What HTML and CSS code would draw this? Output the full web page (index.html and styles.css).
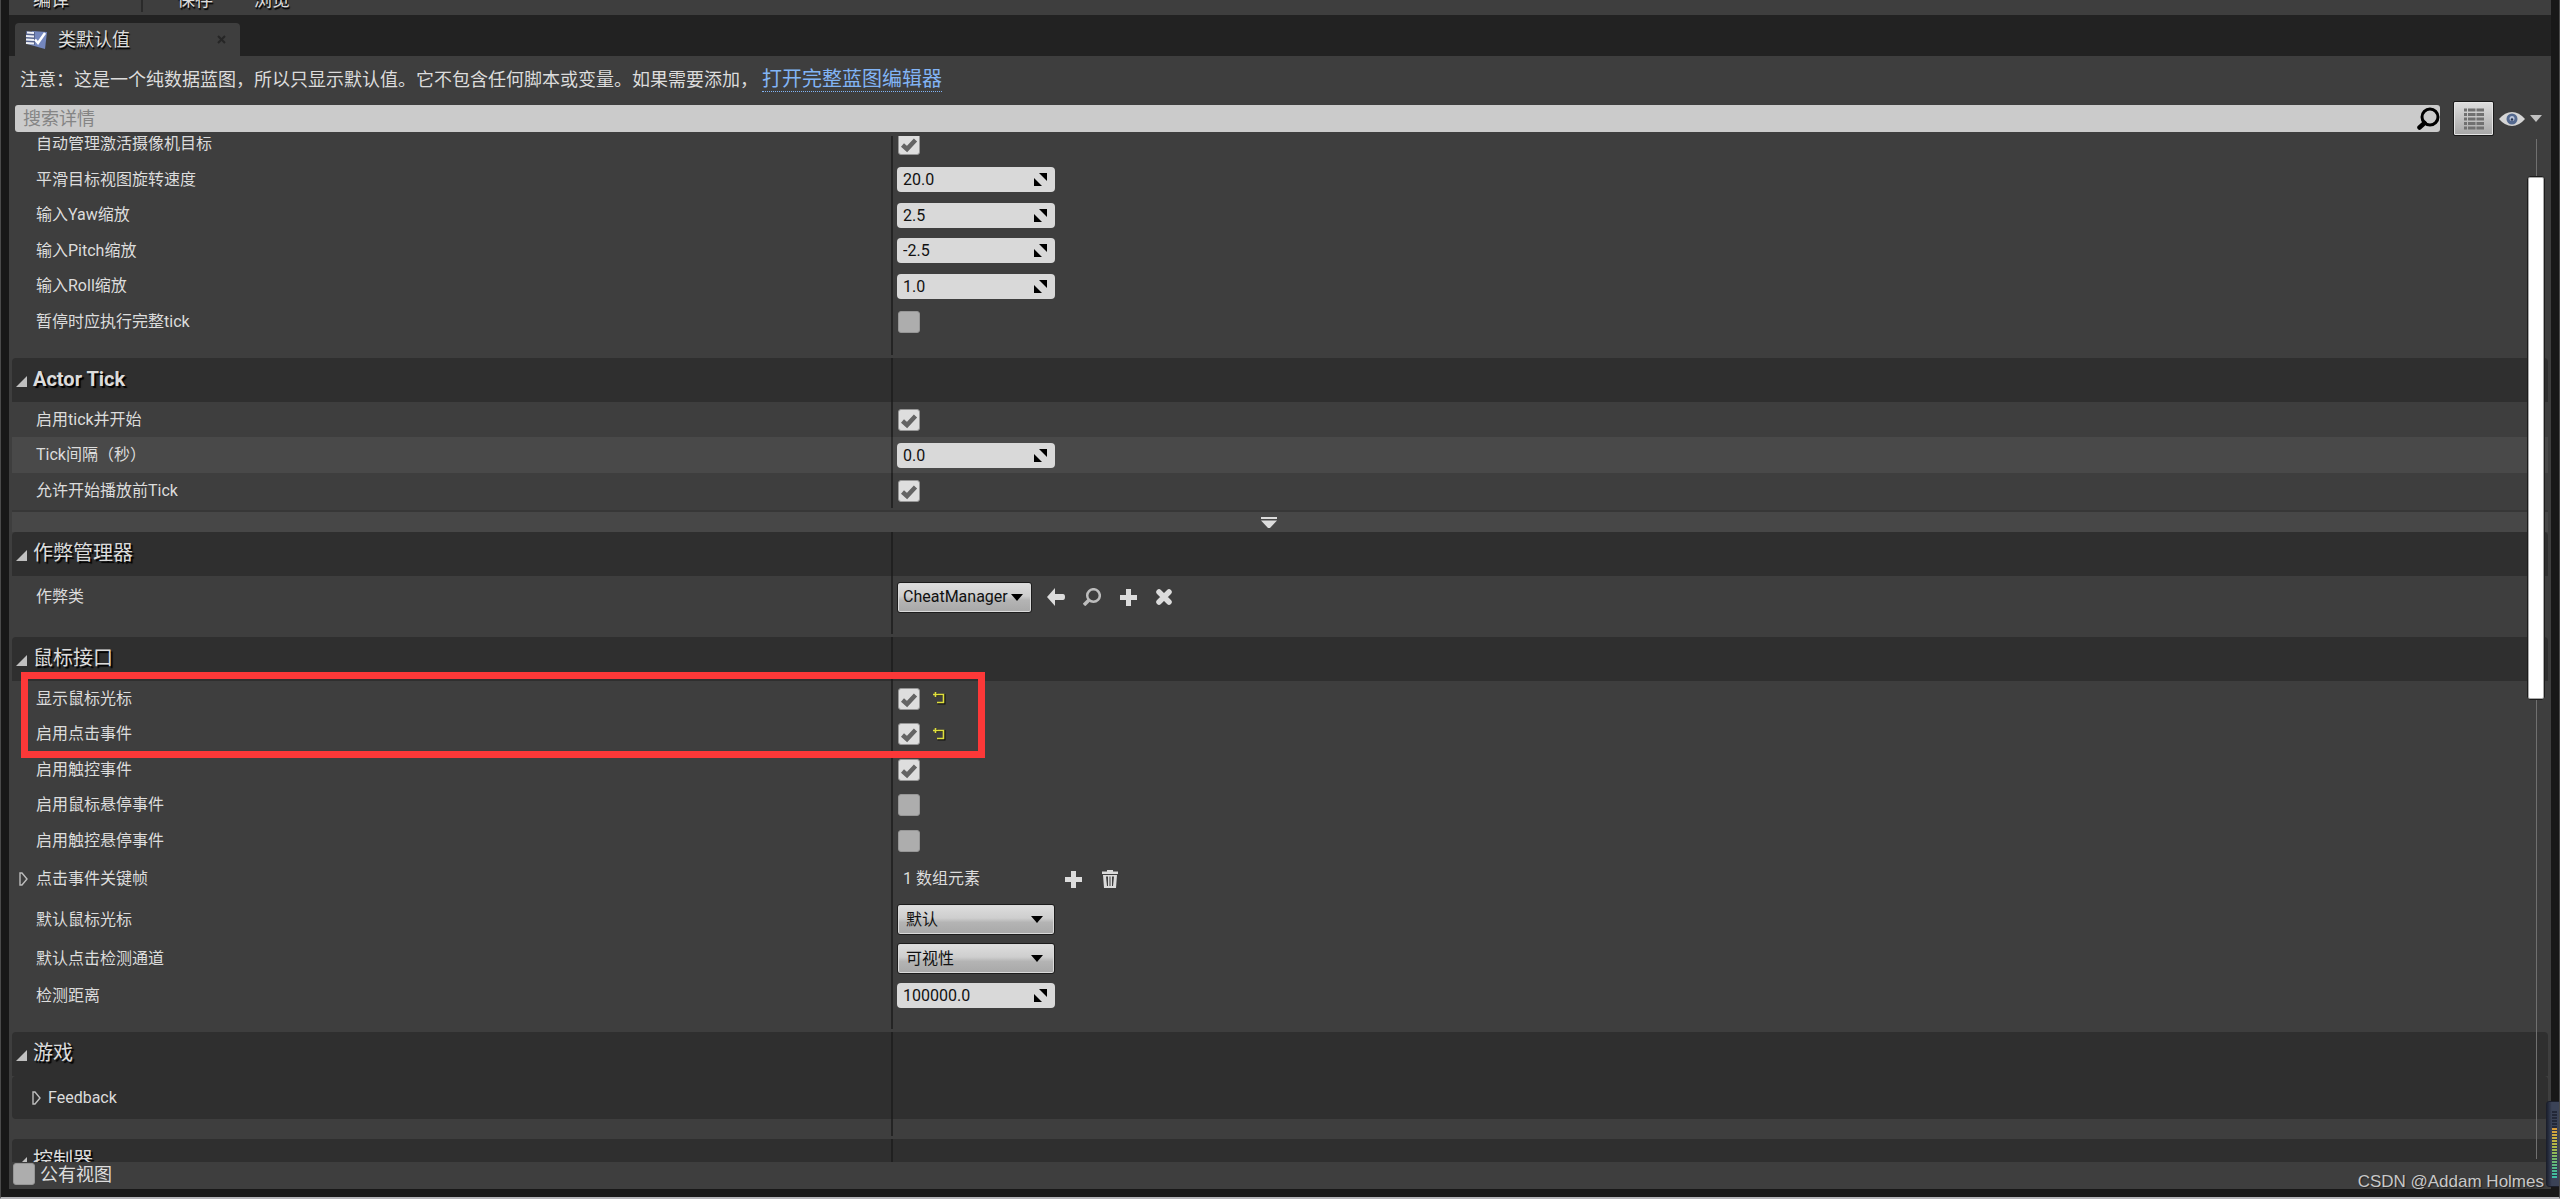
FILE: index.html
```html
<!DOCTYPE html>
<html lang="zh-CN">
<head>
<meta charset="utf-8">
<title>类默认值</title>
<link rel="stylesheet" href="styles.css">
</head>
<body>
<svg class="defs" width="0" height="0" aria-hidden="true">
  <symbol id="spin" viewBox="0 0 13 13"><path d="M5 0H13V8ZM0 5V13H8Z"/></symbol>
  <symbol id="down" viewBox="0 0 12 7"><path d="M0 0H12L6 7Z"/></symbol>
  <symbol id="open" viewBox="0 0 11 11"><path d="M0 11H11V0Z"/></symbol>
  <symbol id="closed" viewBox="0 0 9 14"><path d="M1 1H3L8 7L3 13H1Z" fill="none" stroke="currentColor" stroke-width="1.4"/></symbol>
  <symbol id="plus" viewBox="0 0 17 17"><path d="M6 0H11V6H17V11H11V17H6V11H0V6H6Z"/></symbol>
  <symbol id="reset" viewBox="0 0 13 13"><path d="M3.500 4.500V1M2 3H11.500V11.500H4.500" fill="none" stroke="#111" stroke-width="2"/><path d="M2.500 0V5M0 2.500H10.500V10.500H4" fill="none" stroke="#dede3c" stroke-width="1.600"/></symbol>
</svg>
<div class="window">
  <nav class="toolbar">
    <button class="tool">编译</button>
    <span class="rule"></span>
    <button class="tool">保存</button>
    <button class="tool">浏览</button>
  </nav>
  <div class="tabs">
    <div class="tab">
      <svg width="23" height="20" viewBox="0 0 23 20"><path d="M7 1L22 2L20 19L2 14Z" fill="#7487bd"/><path d="M1 1L10 2V15L1 13Z" fill="#56638c"/><path d="M2 2.500L9 3M1 6L9 6.500M1 9.500L9 10M1 13L9 13.500" stroke="#eef0f6" stroke-width="2.200"/><path d="M10 9.500L13 13L20 3" fill="none" stroke="#fff" stroke-width="2.500"/></svg>
      <span class="tab-name">类默认值</span>
      <button class="close" aria-label="关闭"><svg width="9" height="9" viewBox="0 0 9 9"><path d="M1 1L8 8M8 1L1 8" stroke="#262626" stroke-width="2"/></svg></button>
    </div>
  </div>
  <p class="notice">注意<span class="mid">：</span>这是一个纯数据蓝图<span class="mid">，</span>所以只显示默认值。它不包含任何脚本或变量。如果需要添加<span class="mid">，</span><a class="link" href="#">打开完整蓝图编辑器</a></p>
  <div class="searchbar">
    <div class="search">
      <input class="search-input" type="text" placeholder="搜索详情" aria-label="搜索详情">
      <svg width="23" height="23" viewBox="0 0 23 23"><circle cx="13" cy="10" r="8" fill="none" stroke="#000" stroke-width="3"/><path d="M7.500 16L2.500 20.500" stroke="#000" stroke-width="4.500" stroke-linecap="round"/></svg>
    </div>
    <button class="matrix" aria-label="属性矩阵"><svg width="20" height="22" viewBox="0 0 20 22" stroke="#707070" stroke-width="3.200"><path d="M0 2H3M4 2H11.500M12.500 2H20M0 6.500H3M4 6.500H11.500M12.500 6.500H20M0 11H3M4 11H11.500M12.500 11H20M0 15.500H3M4 15.500H11.500M12.500 15.500H20M0 20H3M4 20H11.500M12.500 20H20"/></svg></button>
    <button class="view" aria-label="视图选项">
      <svg width="26" height="16" viewBox="0 0 26 16"><path d="M0 8Q6 1 13 1T26 8Q20 15 13 15T0 8Z" fill="#d5d5d5"/><circle cx="13" cy="8" r="5.500" fill="#54698f"/><circle cx="13" cy="7.500" r="2.500" fill="#b7c2d8"/><circle cx="13" cy="8.500" r="1.200" fill="#23314d"/></svg>
      <svg width="12" height="7" fill="#c0c0c0"><use href="#down"/></svg>
    </button>
  </div>

  <main class="details">
    <section class="group first">
      <div class="rows">
        <div class="row tall"><label class="name" for="p1">自动管理激活摄像机目标</label><div class="value"><input class="check" type="checkbox" id="p1" checked></div></div>
        <div class="row"><label class="name" for="p2">平滑目标视图旋转速度</label><div class="value"><span class="number"><input type="text" id="p2" value="20.0"><svg width="13" height="13"><use href="#spin"/></svg></span></div></div>
        <div class="row tall"><label class="name" for="p3">输入Yaw缩放</label><div class="value"><span class="number"><input type="text" id="p3" value="2.5"><svg width="13" height="13"><use href="#spin"/></svg></span></div></div>
        <div class="row"><label class="name" for="p4">输入Pitch缩放</label><div class="value"><span class="number"><input type="text" id="p4" value="-2.5"><svg width="13" height="13"><use href="#spin"/></svg></span></div></div>
        <div class="row tall"><label class="name" for="p5">输入Roll缩放</label><div class="value"><span class="number"><input type="text" id="p5" value="1.0"><svg width="13" height="13"><use href="#spin"/></svg></span></div></div>
        <div class="row"><label class="name" for="p6">暂停时应执行完整tick</label><div class="value"><input class="check" type="checkbox" id="p6"></div></div>
        <div class="row pad"></div>
      </div>
    </section>

    <section class="group">
      <h2 class="head latin"><svg width="11" height="11"><use href="#open"/></svg>Actor Tick</h2>
      <div class="rows">
        <div class="row"><label class="name" for="p7">启用tick并开始</label><div class="value"><input class="check" type="checkbox" id="p7" checked></div></div>
        <div class="row tall hover"><label class="name" for="p8">Tick间隔（秒）</label><div class="value"><span class="number"><input type="text" id="p8" value="0.0"><svg width="13" height="13"><use href="#spin"/></svg></span></div></div>
        <div class="row"><label class="name" for="p9">允许开始播放前Tick</label><div class="value"><input class="check" type="checkbox" id="p9" checked></div></div>
      </div>
      <button class="more" aria-label="展开高级"><svg width="16" height="11" viewBox="0 0 16 11"><path d="M0 0H16V2H0ZM0 3.500H16L9 11H7Z" fill="#dcdcdc"/></svg></button>
    </section>

    <section class="group">
      <h2 class="head"><svg width="11" height="11"><use href="#open"/></svg>作弊管理器</h2>
      <div class="rows">
        <div class="row large"><label class="name" for="p10">作弊类</label><div class="value">
          <span class="combo class-combo"><select id="p10"><option>CheatManager</option></select><svg width="12" height="7"><use href="#down"/></svg></span>
          <span class="tools">
            <button class="icon" aria-label="使用选中"><svg width="18" height="18" viewBox="0 0 18 18"><path d="M0 9L8 0V6H16Q18 6 18 9T16 12H8V18Z"/></svg></button>
            <button class="icon" aria-label="浏览"><svg width="18" height="18" viewBox="0 0 18 18"><circle cx="10.500" cy="7.500" r="6.300" fill="none" stroke="#bdbdbd" stroke-width="2.500"/><path d="M6 12L1 17" stroke="#bdbdbd" stroke-width="3.500"/></svg></button>
            <button class="icon" aria-label="新建"><svg width="17" height="17"><use href="#plus"/></svg></button>
            <button class="icon" aria-label="清除"><svg width="16" height="16" viewBox="0 0 16 16"><path d="M3 3L13 13M13 3L3 13" stroke="#dcdcdc" stroke-width="5.500" stroke-linecap="round"/></svg></button>
          </span></div></div>
        <div class="row pad"></div>
      </div>
    </section>

    <section class="group">
      <h2 class="head"><svg width="11" height="11"><use href="#open"/></svg>鼠标接口</h2>
      <div class="rows marked">
        <div class="row"><label class="name" for="p11">显示鼠标光标</label><div class="value"><input class="check" type="checkbox" id="p11" checked><button class="reset" aria-label="重置"><svg width="13" height="13"><use href="#reset"/></svg></button></div></div>
        <div class="row tall"><label class="name" for="p12">启用点击事件</label><div class="value"><input class="check" type="checkbox" id="p12" checked><button class="reset" aria-label="重置"><svg width="13" height="13"><use href="#reset"/></svg></button></div></div>
        <div class="row"><label class="name" for="p13">启用触控事件</label><div class="value"><input class="check" type="checkbox" id="p13" checked></div></div>
        <div class="row tall"><label class="name" for="p14">启用鼠标悬停事件</label><div class="value"><input class="check" type="checkbox" id="p14"></div></div>
        <div class="row"><label class="name" for="p15">启用触控悬停事件</label><div class="value"><input class="check" type="checkbox" id="p15"></div></div>
        <div class="row large"><span class="name array-name"><button class="twist" aria-label="展开"><svg width="9" height="14"><use href="#closed"/></svg></button>点击事件关键帧</span><div class="value">
          <span class="count">1 数组元素</span>
          <button class="icon" aria-label="添加元素"><svg width="17" height="17"><use href="#plus"/></svg></button>
          <button class="icon trash" aria-label="清空"><svg width="16" height="18" viewBox="0 0 16 18"><path d="M0 1.500H5V0H11V1.500H16V4H0Z"/><path fill-rule="evenodd" d="M1 5H15L14 18H2ZM4 6.500L5 16H6V6.500ZM7.500 6.500V16H8.500V6.500ZM10 6.500V16H11L12 6.500Z"/></svg></button></div></div>
        <div class="row combo-row"><label class="name" for="p16">默认鼠标光标</label><div class="value"><span class="combo"><select id="p16"><option>默认</option></select><svg width="12" height="7"><use href="#down"/></svg></span></div></div>
        <div class="row combo-row"><label class="name" for="p17">默认点击检测通道</label><div class="value"><span class="combo"><select id="p17"><option>可视性</option></select><svg width="12" height="7"><use href="#down"/></svg></span></div></div>
        <div class="row"><label class="name" for="p18">检测距离</label><div class="value"><span class="number"><input type="text" id="p18" value="100000.0"><svg width="13" height="13"><use href="#spin"/></svg></span></div></div>
        <div class="row pad"></div>
      </div>
    </section>

    <section class="group">
      <h2 class="head"><svg width="11" height="11"><use href="#open"/></svg>游戏</h2>
      <div class="rows">
        <div class="row large sub"><span class="name"><button class="twist" aria-label="展开"><svg width="9" height="14"><use href="#closed"/></svg></button>Feedback</span><div class="value"></div></div>
        <div class="row pad"></div>
      </div>
    </section>

    <section class="group">
      <h2 class="head"><svg width="11" height="11"><use href="#open"/></svg>控制器</h2>
    </section>
    <div class="scroll"><div class="thumb"></div></div>
  </main>
  <footer class="foot"><input class="check" type="checkbox" id="pub"><label for="pub">公有视图</label></footer>
</div>
<div class="meter"><div class="idle"></div><div class="level"></div></div>
<div class="credit">CSDN @Addam Holmes</div>
</body>
</html>
```
FILE: styles.css
```css
*, *::before { box-sizing: border-box; }
body {
  margin: 0;
  height: 100vh;
  overflow: hidden;
  position: relative;
  display: flex;
  background: #181818;
  border-left: 1px solid #4a4a4a;
  border-right: 1px solid #4a4a4a;
  border-bottom: 2px solid #b4b4b8;
  padding: 0 8px 8px;
  color: #dcdcdc;
  font: 16px/20px Roboto, "Noto Sans CJK SC", sans-serif;
}
svg { display: block; flex: none; }
.defs { position: absolute; }
button {
  appearance: none;
  border: 0;
  padding: 0;
  margin: 0;
  background: none;
  color: inherit;
  font: inherit;
}
.window { flex: 1; min-width: 0; display: flex; flex-direction: column; background: #3e3e3e; }

.toolbar {
  height: 15px;
  padding-left: 24px;
  display: flex;
  align-items: flex-end;
  overflow: hidden;
}
.tool { font-size: 18px; line-height: 20px; padding-bottom: 5px; text-shadow: 1px 2px 1px #000; }
.tool + .tool { margin-left: 41px; }
.rule { width: 2px; height: 12px; background: #2a2a2a; margin: 0 34px 0 72px; align-self: flex-start; }

.tabs { height: 41px; padding: 8px 6px 0; background: #222; }
.tab {
  width: 225px;
  height: 33px;
  padding: 0 14px 0 10px;
  display: flex;
  align-items: center;
  background: #3e3e3e;
  border-radius: 4px 4px 0 0;
}
.tab-name { flex: 1; margin-left: 10px; font-size: 18px; text-shadow: 1px 2px 1px #000; }

.notice { margin: 0; padding: 10px 11px 0; height: 48px; font-size: 18px; line-height: 24px; }
.mid { font-family: "Noto Sans CJK TC", sans-serif; }
.link {
  margin-left: 4px;
  display: inline-block;
  color: #82b4f5;
  font-size: 20px;
  line-height: 24px;
  text-decoration: none;
  border-bottom: 1px dotted #82b4f5;
}

.searchbar { height: 32px; padding: 0 9px 3px 6px; display: flex; align-items: center; }
.search {
  flex: 1;
  height: 27px;
  display: flex;
  align-items: center;
  background: #cbcbcb;
  border-radius: 3px;
}
.search-input {
  flex: 1;
  min-width: 0;
  height: 27px;
  border: 0;
  padding: 0 8px;
  background: none;
  font: inherit;
  font-size: 18px;
}
.search-input::placeholder { color: #858585; }
.matrix {
  width: 41px;
  height: 35px;
  margin: 0 5px 0 13px;
  display: flex;
  align-items: center;
  justify-content: center;
  border: 1px solid #1a1a1a;
  border-radius: 2px;
  background: linear-gradient(#dedede, #a6a6a6);
  box-shadow: inset 0 0 0 1px #e4e4e4;
}
.view { display: flex; align-items: center; gap: 5px; }

.details { flex: 1; min-height: 0; overflow: hidden; position: relative; padding: 0 3px; }
.first { margin-top: -10px; }
.group .rows {
  background: linear-gradient(#242424, #242424) 879px 0 / 2px 100% no-repeat;
}
.head {
  position: relative;
  margin: 0;
  height: 44px;
  padding: 0 4px 2px;
  display: flex;
  align-items: center;
  gap: 6px;
  background: linear-gradient(#202020, #202020) 879px 0 / 2px 100% no-repeat #2f2f2f;
  border-radius: 4px 4px 0 0;
  font-size: 20px;
  font-weight: 400;
  line-height: 24px;
  text-shadow: 2px 2px 1px #000;
}
.head svg { fill: #c0c0c0; margin-top: 4px; }
.latin { font-weight: 700; }
.row { height: 35px; display: grid; grid-template-columns: 881px 1fr; align-items: center; }
.tall { height: 36px; }
.large { height: 42px; }
.combo-row { height: 39px; }
.pad { height: 16px; }
.rows:has(.pad) { margin-bottom: 3px; }
.rows { position: relative; }
.hover { background: linear-gradient(#2c2c2c, #2c2c2c) 879px 0 / 2px 100% no-repeat #494949; }
.name { padding-left: 24px; }
.value { display: flex; align-items: center; padding-left: 4px; }

.check {
  appearance: none;
  width: 22px;
  height: 22px;
  margin: 0;
  background: #adadad;
  border: 1px solid #969696;
  border-radius: 3px;
}
.check:checked {
  background: #dedede url("data:image/svg+xml,%3Csvg xmlns='http://www.w3.org/2000/svg' viewBox='0 0 20 20'%3E%3Cpath d='M3.500 11L8 15L16.500 6' fill='none' stroke='%23646464' stroke-width='4.500'/%3E%3C/svg%3E") center / 20px 20px no-repeat;
}
.value .check { margin-left: 1px; }
.number {
  width: 158px;
  height: 25px;
  padding: 0 8px 0 6px;
  display: flex;
  align-items: center;
  background: #d9d9d9;
  border-radius: 4px;
}
.number input {
  flex: 1;
  min-width: 0;
  height: 25px;
  border: 0;
  padding: 0;
  background: none;
  color: #111;
  font: inherit;
}
.combo { position: relative; width: 158px; height: 31px; }
.combo select {
  appearance: none;
  width: 100%;
  height: 31px;
  margin: 0;
  padding: 0 8px;
  color: #111;
  font: inherit;
  border: 1px solid #1c1c1c;
  border-radius: 3px;
  background: linear-gradient(#dedede, #cecece 45%, #b4b4b4 60%, #a8a8a8);
  box-shadow: inset 0 0 0 1px #dadada;
}
.combo svg { position: absolute; right: 12px; top: 12px; pointer-events: none; }
.class-combo { width: 135px; }
.class-combo select { padding: 0 5px; }
.class-combo svg { right: 9px; }
.tools { display: flex; align-items: center; gap: 18px; margin-left: 15px; }
.icon { fill: #dcdcdc; display: flex; justify-content: center; }
.tools .icon { width: 18px; }
.trash { margin-left: 20px; }
.count { width: 168px; padding-left: 6px; }
.reset { margin-left: 13px; }
.array-name { display: flex; align-items: center; padding-left: 7px; }
.twist { color: #bdbdbd; margin-right: 8px; }
.more {
  width: 100%;
  height: 22px;
  margin-top: 2px;
  padding-right: 22px;
  display: flex;
  align-items: center;
  justify-content: center;
  background: #474747;
  border-top: 2px solid #373737;
}
.sub { background: linear-gradient(#202020, #202020) 879px 0 / 2px 100% no-repeat #2f2f2f; border-radius: 4px; height: 43px; }
.sub .name { display: flex; align-items: center; padding-left: 20px; }
.sub .twist { margin-right: 7px; }
.sub + .pad { height: 17px; }

/* callout drawn over the first two rows of the group */
.marked::before {
  content: "";
  position: absolute;
  left: 9px;
  top: -9px;
  width: 964px;
  height: 86px;
  border: 7px solid #fc3838;
  pointer-events: none;
}

.scroll {
  position: absolute;
  top: 3px;
  right: 6px;
  bottom: 3px;
  width: 18px;
  background: linear-gradient(#707070, #707070) center / 1px 100% no-repeat;
}
.thumb {
  position: absolute;
  top: 37px;
  width: 18px;
  height: 524px;
  background: #fff;
  border: 1px solid #1c1c1c;
  border-radius: 3px;
  box-shadow: inset 0 0 0 1px #aaa;
}
.foot { height: 27px; padding-left: 4px; display: flex; align-items: center; gap: 5px; font-size: 18px; }
.foot .check { margin-bottom: 3px; }
.foot label { margin-bottom: 2px; }

.meter {
  position: absolute;
  right: -1px;
  bottom: 10px;
  width: 14px;
  height: 86px;
  padding: 9px 2px 8px 5px;
  display: flex;
  flex-direction: column;
  background: linear-gradient(90deg, #1c2130, #3b4357 40%);
  border: 1px solid #1c1f2b;
  border-radius: 3px 0 0 3px;
}
.idle { height: 17px; background: repeating-linear-gradient(#232838 0 2px, #3b4357 2px 3px); }
.level {
  flex: 1;
  background:
    repeating-linear-gradient(transparent 0 2px, #2c3444 2px 3px),
    linear-gradient(#d89a3c, #c8b040 20%, #a8b848 40%, #78b868 60%, #4ab890 85%, #3cc0a8);
}
.credit {
  position: absolute;
  right: 15px;
  bottom: 5px;
  color: #c8c8c8;
  font: 17px/20px "Liberation Sans", sans-serif;
  text-shadow: 1px 1px 1px #222;
}
```
